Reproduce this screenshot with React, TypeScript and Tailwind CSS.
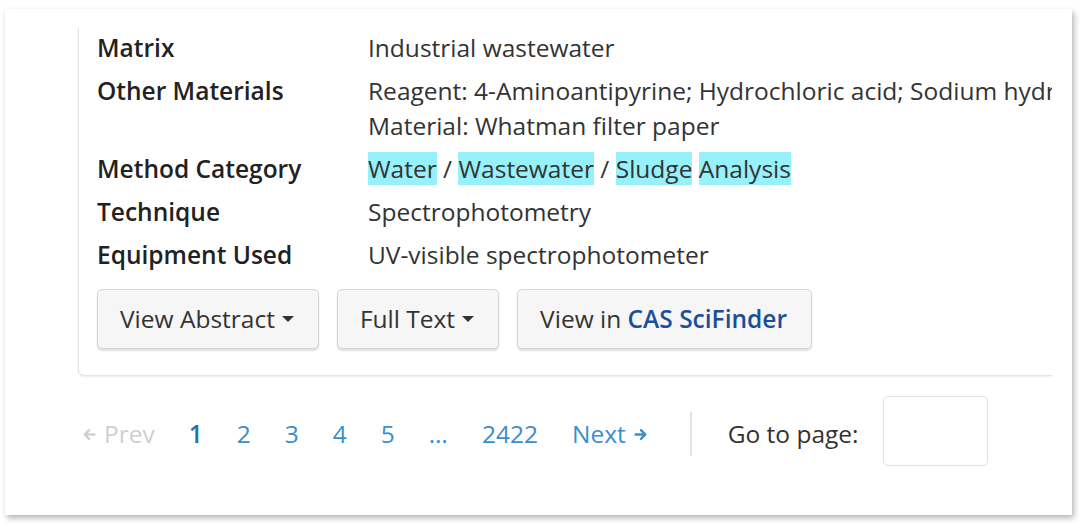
import React from 'react';

const rows: { label: string; value: React.ReactNode }[] = [
  { label: 'Matrix', value: 'Industrial wastewater' },
  {
    label: 'Other Materials',
    value: (
      <>
        <div className="whitespace-nowrap">Reagent: 4-Aminoantipyrine; Hydrochloric acid; Sodium hydroxide; Potassium ferricyanide</div>
        <div>Material: Whatman filter paper</div>
      </>
    ),
  },
  {
    label: 'Method Category',
    value: (
      <>
        <mark className="bg-[#97f1fa] text-inherit">Water</mark> / <mark className="bg-[#97f1fa] text-inherit">Wastewater</mark> /{' '}
        <mark className="bg-[#97f1fa] text-inherit">Sludge</mark> <mark className="bg-[#97f1fa] text-inherit">Analysis</mark>
      </>
    ),
  },
  { label: 'Technique', value: 'Spectrophotometry' },
  { label: 'Equipment Used', value: 'UV-visible spectrophotometer' },
];

const Caret = () => (
  <span className="ml-[7px] inline-block h-0 w-0 border-x-[6px] border-t-[6px] border-x-transparent border-t-[#333] align-middle" />
);

const Arrow = ({ dir }: { dir: 'left' | 'right' }) => (
  <svg viewBox="0 0 12 12" className="h-[13px] w-[14px]" fill="none" stroke="currentColor" strokeWidth="2.2" strokeLinecap="round" strokeLinejoin="round">
    {dir === 'left' ? <path d="M11 6H2M6 2L2 6l4 4" /> : <path d="M1 6h9M6 2l4 4-4 4" />}
  </svg>
);

const btn =
  'flex h-[60px] items-center rounded-[5px] border border-[#d4d4d4] bg-[#f6f6f6] pl-[22px] pr-[24px] shadow-[0_2px_2px_rgba(0,0,0,0.12)]';

export default function App() {
  return (
    <div className="h-[527px] w-[1081px] bg-white pl-[5px] pt-[9px]" style={{ fontFamily: '"Open Sans", "Noto Sans", sans-serif' }}>
      <div className="h-[506px] w-[1067px] bg-white pr-[20px] pt-[19px] shadow-[2px_3px_6px_rgba(0,0,0,0.3)]">
        <div className="h-full overflow-hidden">
          {/* result card */}
          <div className="ml-[73px] w-[1000px] rounded-b-[6px] border-x border-b border-[#e2e2e2] pb-[26px] pl-[18px] pt-[2px] shadow-[0_1px_2px_rgba(0,0,0,0.08)]">
            <div className="flex flex-col gap-[8px] text-[24.5px] leading-[35px] text-[#333]">
              {rows.map((r) => (
                <div key={r.label} className="flex">
                  <div className="w-[271px] shrink-0 font-semibold text-[#222]">{r.label}</div>
                  <div className="min-w-0">{r.value}</div>
                </div>
              ))}
            </div>
            <div className="mt-[17px] flex gap-[18px] text-[24.5px] text-[#333]">
              <button className={btn}>
                View Abstract
                <Caret />
              </button>
              <button className={btn}>
                Full Text
                <Caret />
              </button>
              <button className={btn}>
                View in&nbsp;<span className="font-semibold text-[#1b4f99]">CAS SciFinder</span>
              </button>
            </div>
          </div>

          {/* pagination */}
          <div className="mt-[26px] flex items-center pl-[60px] text-[24.5px]">
            <span className="flex items-center gap-[8px] px-[17px] text-[#cfcfcf]">
              <Arrow dir="left" />
              Prev
            </span>
            <span className="px-[17px] font-semibold text-[#2470a8]">1</span>
            {['2', '3', '4', '5', '…', '2422'].map((p) => (
              <span key={p} className="px-[17px] text-[#3b8dcc]">
                {p}
              </span>
            ))}
            <span className="flex items-center gap-[8px] px-[17px] text-[#3b8dcc]">
              Next
              <Arrow dir="right" />
            </span>
            <div className="ml-[25px] h-[44px] w-[2px] bg-[#e3e3e3]" />
            <span className="ml-[36px] text-[#333]">Go to page:</span>
            <input className="ml-[24px] -mt-[6px] h-[70px] w-[105px] rounded-[5px] border border-[#e0e0e0] bg-white outline-none" />
          </div>
        </div>
      </div>
    </div>
  );
}
